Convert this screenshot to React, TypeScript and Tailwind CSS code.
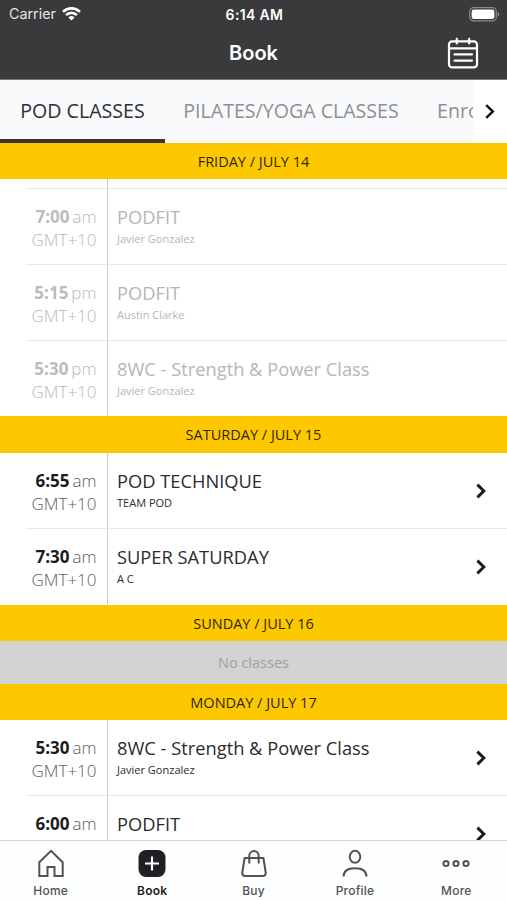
import type { ReactNode } from "react";
import clsx from "clsx";

type ClassItem = {
  time: string;
  period: string;
  title: string;
  trainer: string;
};

type Day = {
  label: string;
  past?: boolean;
  classes: ClassItem[];
};

const days: Day[] = [
  {
    label: "FRIDAY / JULY 14",
    past: true,
    classes: [
      { time: "7:00", period: "am", title: "PODFIT", trainer: "Javier Gonzalez" },
      { time: "5:15", period: "pm", title: "PODFIT", trainer: "Austin Clarke" },
      {
        time: "5:30",
        period: "pm",
        title: "8WC - Strength & Power Class",
        trainer: "Javier Gonzalez",
      },
    ],
  },
  {
    label: "SATURDAY / JULY 15",
    classes: [
      { time: "6:55", period: "am", title: "POD TECHNIQUE", trainer: "TEAM POD" },
      { time: "7:30", period: "am", title: "SUPER SATURDAY", trainer: "A C" },
    ],
  },
  { label: "SUNDAY / JULY 16", classes: [] },
  {
    label: "MONDAY / JULY 17",
    classes: [
      {
        time: "5:30",
        period: "am",
        title: "8WC - Strength & Power Class",
        trainer: "Javier Gonzalez",
      },
      { time: "6:00", period: "am", title: "PODFIT", trainer: "" },
    ],
  },
];

function StatusBar() {
  return (
    <div className="grid h-7 grid-cols-3 items-center pl-[9px] pr-[7px] text-[14px]">
      <div className="flex items-center gap-[6px]">
        <span className="text-[14.3px] text-[#e4e4e5]">Carrier</span>
        <svg width="19" height="14" viewBox="0 0 19 14" fill="none" stroke="white" strokeWidth="2.7">
          <path d="M1 4.9a12.2 12.2 0 0 1 17 0" />
          <path d="M4.1 8.1a7.8 7.8 0 0 1 10.8 0" />
          <path d="M9.5 13.6 6.4 10.5a4.5 4.5 0 0 1 6.2 0z" fill="white" stroke="none" />
        </svg>
      </div>
      <span className="text-center text-[14px] font-semibold tracking-[0.35px]">6:14 AM</span>
      <svg className="justify-self-end" width="31" height="15" viewBox="0 0 31 15">
        <rect x="0.7" y="0.7" width="26.6" height="13.2" rx="4" fill="none" stroke="#8b8b8d" strokeWidth="1.2" />
        <rect x="2.6" y="2.6" width="22.8" height="9.4" rx="2.3" fill="white" />
        <path d="M28.7 5v4.6c1.1-.4 1.6-1.3 1.6-2.3s-.5-1.9-1.6-2.3z" fill="#8b8b8d" />
      </svg>
    </div>
  );
}

function Header() {
  return (
    <header className="h-[79.6px] shrink-0 border-b border-[#77777a] bg-[#3a3a3c] font-[Inter,sans-serif] text-white">
      <StatusBar />
      <div className="grid h-[49px] grid-cols-3 items-center px-7">
        <h1 className="col-start-2 text-center text-[20px] font-semibold">Book</h1>
        <svg
          className="justify-self-end"
          width="32"
          height="32"
          viewBox="0 0 32 32"
          fill="none"
          stroke="white"
          strokeWidth="2.2"
          strokeLinecap="round"
        >
          <rect x="2" y="4.4" width="28" height="26" rx="3.2" />
          <path d="M2 11.4h28M9.8 1.8v4.6M22.2 1.8v4.6M7.5 17.4h17.5M7.5 23.6h17.5" />
        </svg>
      </div>
    </header>
  );
}

function Chevron({ className }: { className?: string }) {
  return (
    <svg
      className={className}
      width="10"
      height="16"
      viewBox="0 0 10 16"
      fill="none"
      stroke="currentColor"
      strokeWidth="3"
    >
      <path d="M1.4 1.6 7.8 8l-6.4 6.4" />
    </svg>
  );
}

function Tabs() {
  return (
    <nav className="flex h-[63.1px] shrink-0 bg-[#f8fafc] text-[19.6px] text-[#8e8f94]">
      <div className="flex min-w-0 flex-1 overflow-hidden whitespace-nowrap">
        <div className="flex w-[165px] shrink-0 items-center justify-center border-b-[4px] border-[#38363a] pt-1 text-[#2f3033]">
          POD CLASSES
        </div>
        <div className="flex w-[252px] shrink-0 items-center justify-center">
          PILATES/YOGA CLASSES
        </div>
        <div className="flex shrink-0 items-center pl-5">Enrolments</div>
      </div>
      <div className="flex w-[34px] shrink-0 items-center bg-white pl-3 text-black">
        <svg width="10" height="15" viewBox="0 0 10 15" fill="none" stroke="currentColor" strokeWidth="2.4">
          <path d="M1.2 1.2 7.8 7.5l-6.6 6.3" />
        </svg>
      </div>
    </nav>
  );
}

function ClassRow({ item, past, last }: { item: ClassItem; past?: boolean; last: boolean }) {
  return (
    <li className="flex h-[75.8px]">
      <div className="w-[26px] shrink-0" />
      <div
        className={clsx(
          "w-[82px] shrink-0 border-b border-r border-r-[#c9c9cb] pr-[10.5px] pt-[16px] text-right text-[17px] leading-[23px]",
          last ? "border-b-transparent" : "border-b-[#e9e9ea]",
          past ? "text-[#b8b8ba]" : "text-[#5c5c60]",
        )}
      >
        <div className="whitespace-nowrap font-light">
          <span className={clsx("mr-[3px] font-bold", past ? "text-[#bcbcbe]" : "text-[#1c1c1e]")}>
            {item.time}
          </span>
          {item.period}
        </div>
        <div className="font-light">GMT+10</div>
      </div>
      <div
        className={clsx(
          "flex flex-1 items-center border-b pl-[9px] pr-[21px]",
          last ? "border-b-transparent" : "border-b-[#e9e9ea]",
          past ? "text-[#b6b6b8]" : "text-[#2c2c2e]",
        )}
      >
        <div className="flex-1 self-start pt-[16px]">
          <div className="text-[18.3px] leading-6">{item.title}</div>
          <div className="text-[11px] leading-5">{item.trainer}</div>
        </div>
        {!past && <Chevron className="mt-px text-[#1c1c1e]" />}
      </div>
    </li>
  );
}

function DaySection({ day }: { day: Day }) {
  return (
    <section>
      <h2 className="flex h-[36.6px] items-center justify-center bg-[#fdc800] pt-px text-[14.5px] text-[#2e2708]">
        {day.label}
      </h2>
      {/* bottom edge of the class scrolled under the sticky day label */}
      {day.past && (
        <div className="flex h-[9.8px] pl-[26px]">
          <div className="w-[82px] border-b border-r border-b-[#e9e9ea] border-r-[#c9c9cb]" />
          <div className="flex-1 border-b border-[#e9e9ea]" />
        </div>
      )}
      {day.classes.length === 0 ? (
        <p className="flex h-[42.4px] items-center justify-center bg-[#d3d3d4] pt-px text-[14.5px] text-[#a0a0a2]">
          No classes
        </p>
      ) : (
        <ul>
          {day.classes.map((item, i) => (
            <ClassRow
              key={item.time}
              item={item}
              past={day.past}
              last={i === day.classes.length - 1}
            />
          ))}
        </ul>
      )}
    </section>
  );
}

function NavItem({ label, active, children }: { label: string; active?: boolean; children: ReactNode }) {
  return (
    <div className={clsx("flex flex-1 flex-col items-center", active ? "text-[#1f2023]" : "text-[#515257]")}>
      <svg
        width="28"
        height="28"
        viewBox="0 0 28 28"
        fill="none"
        stroke="currentColor"
        strokeWidth="2"
        strokeLinejoin="round"
      >
        {children}
      </svg>
      <span
        className={clsx(
          "mt-[6px] text-[12px] leading-4 tracking-[0.2px]",
          active ? "font-semibold" : "font-medium",
        )}
      >
        {label}
      </span>
    </div>
  );
}

function BottomNav() {
  return (
    <nav className="flex h-[60px] shrink-0 border-t border-[#d9d9db] bg-[#fdfefe] pt-[8px] font-[Inter,sans-serif]">
      <NavItem label="Home">
        <path d="M2.3 27V13.2L14 1.8l11.7 11.4V27h-8.2v-9h-7v9z" strokeLinejoin="miter" />
      </NavItem>
      <NavItem label="Book" active>
        <rect x="0.5" y="1" width="27" height="27" rx="7.5" fill="currentColor" stroke="none" />
        <path d="M14 7.5v14M7 14.5h14" stroke="white" strokeWidth="2.2" />
      </NavItem>
      <NavItem label="Buy">
        <path d="M4.6 9h18.8l2.3 14.5c.3 2-.9 3.5-2.9 3.5H5.2c-2 0-3.2-1.5-2.9-3.5z" />
        <path d="M9.3 14.5V6.7a4.7 4.7 0 0 1 9.4 0v7.8" />
      </NavItem>
      <NavItem label="Profile">
        <ellipse cx="14" cy="7.8" rx="5.3" ry="6" />
        <path d="M2.5 27.5c.2-5.3 4.2-8.2 11.5-8.2s11.3 2.9 11.5 8.2" />
      </NavItem>
      <NavItem label="More">
        <circle cx="4" cy="14.5" r="2.6" />
        <circle cx="14" cy="14.5" r="2.6" />
        <circle cx="24" cy="14.5" r="2.6" />
      </NavItem>
    </nav>
  );
}

export default function App() {
  return (
    <div className="flex h-[900px] w-[507px] flex-col overflow-hidden bg-white font-['Open_Sans',sans-serif]">
      <Header />
      <Tabs />
      <main className="min-h-0 flex-1 overflow-hidden">
        {days.map((day) => (
          <DaySection key={day.label} day={day} />
        ))}
      </main>
      <BottomNav />
    </div>
  );
}
